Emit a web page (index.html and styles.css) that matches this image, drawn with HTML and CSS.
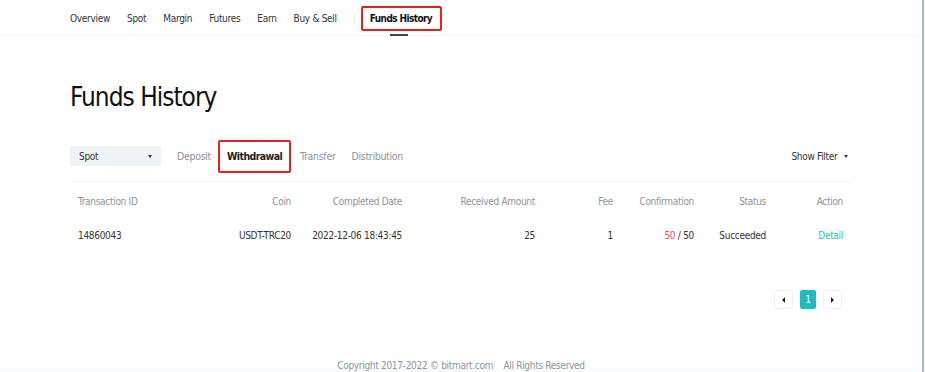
FILE: index.html
```html
<!DOCTYPE html>
<html>
<head>
    <meta charset="utf-8">
    <link rel="stylesheet" href="styles.css">
</head>
<body>
<div class="page">

<div class="topnav">
    <div class="wrap nav-items">
        <a class="nav-link">Overview</a>
        <a class="nav-link">Spot</a>
        <a class="nav-link">Margin</a>
        <a class="nav-link">Futures</a>
        <a class="nav-link">Earn</a>
        <a class="nav-link">Buy &amp; Sell</a>
        <span class="nav-sep"></span>
        <a class="nav-link nav-active">Funds History</a>
    </div>
</div>

<div class="wrap">
    <h1 class="title">Funds History</h1>

    <div class="toolbar">
        <div class="select">Spot <span class="caret"></span></div>
        <a class="tab">Deposit</a>
        <a class="tab tab-active">Withdrawal</a>
        <a class="tab">Transfer</a>
        <a class="tab">Distribution</a>
        <a class="filter">Show Filter <span class="caret"></span></a>
    </div>

    <div class="grid head">
        <div class="left">Transaction ID</div>
        <div>Coin</div>
        <div>Completed Date</div>
        <div>Received Amount</div>
        <div>Fee</div>
        <div>Confirmation</div>
        <div>Status</div>
        <div>Action</div>
    </div>
    <div class="grid row">
        <div class="left">14860043</div>
        <div>USDT-TRC20</div>
        <div>2022-12-06 18:43:45</div>
        <div>25</div>
        <div>1</div>
        <div><span class="red">50</span> / 50</div>
        <div>Succeeded</div>
        <div><a class="link">Detail</a></div>
    </div>

    <div class="pager">
        <span class="pg"><span class="tri tri-left"></span></span>
        <span class="pg pg-on">1</span>
        <span class="pg"><span class="tri tri-right"></span></span>
    </div>

    <div class="footer">Copyright 2017-2022 &copy; bitmart.com &nbsp;&nbsp; All Rights Reserved</div>
</div>

</div>
</body>
</html>
```

FILE: styles.css
```css
* {
    box-sizing: border-box;
    font-family: "DejaVu Sans Condensed", "Liberation Sans", sans-serif;
}

html, body {
    height: 100%;
}

body {
    margin: 0;
    background: #f9fbfd;
    color: #333;
    font-size: 10px;
    letter-spacing: -0.3px;
    overflow: hidden;
}

.page {
    width: 924px;
    height: 372px;
    background: linear-gradient(#fff 368px, #f9fbfd 368px);
    border-right: 2px solid #a7bcc6;
}

.wrap {
    width: 782px;
    margin: 0 auto;
}

.topnav {
    height: 36px;
    border-bottom: 1px solid #f3f4f6;
}

.nav-items {
    display: flex;
    align-items: center;
    height: 36px;
    gap: 17px;
}

.nav-link {
    color: #333;
}

.nav-sep {
    width: 1px;
    height: 12px;
    background: #eceef0;
}

.nav-active {
    position: relative;
    font-weight: bold;
    letter-spacing: -0.6px;
    color: #111;
    border: 2px solid #e4231d;
    border-radius: 2px;
    padding: 5px 8px 5px 7px;
    margin-left: -11px;
}

.nav-active::after {
    content: "";
    position: absolute;
    left: 27px;
    bottom: -7px;
    width: 18px;
    height: 2px;
    background: #444;
}

.title {
    margin: 48px 0 0;
    font-size: 26px;
    font-weight: normal;
    color: #111;
    line-height: 26px;
    letter-spacing: -1px;
}

.toolbar {
    display: flex;
    align-items: center;
    margin-top: 29px;
    height: 34px;
}

.select {
    width: 91px;
    height: 20px;
    background: #eef3f6;
    border-radius: 2px;
    padding: 0 9px;
    display: flex;
    align-items: center;
    justify-content: space-between;
    color: #333;
    margin-right: 16px;
}

.caret {
    display: inline-block;
    border-left: 2.5px solid transparent;
    border-right: 2.5px solid transparent;
    border-top: 3px solid #333;
    vertical-align: middle;
}

.tab {
    color: #8b949c;
    font-size: 10.5px;
    margin-right: 16px;
}

.tab-active {
    color: #222;
    font-weight: bold;
    letter-spacing: -0.6px;
    border: 2px solid #e4231d;
    border-radius: 2px;
    height: 33px;
    padding: 0 7px;
    display: flex;
    align-items: center;
    margin-left: -9px;
    margin-right: 9px;
}

.filter {
    margin-left: auto;
    margin-right: 4px;
    color: #333;
}

.filter .caret {
    margin-left: 4px;
}

.grid {
    display: grid;
    grid-template-columns: 138px 83px 111px 133px 78px 81px 72px 77px;
    text-align: right;
}

.grid .left {
    text-align: left;
    padding-left: 8px;
}

.head {
    margin-top: 8px;
    border-top: 1px solid #f2f3f5;
    height: 40px;
    align-items: center;
    color: #8b949c;
}

.row {
    height: 28px;
    align-items: center;
    color: #333;
}

.red {
    color: #f04b62;
}

.link {
    color: #26bfc7;
}

.pager {
    display: flex;
    justify-content: flex-end;
    gap: 7px;
    margin-top: 41px;
    margin-right: 10px;
}

.pg {
    width: 19px;
    height: 19px;
    border: 1px solid #eef0f2;
    border-radius: 2px;
    display: flex;
    align-items: center;
    justify-content: center;
    color: #fff;
}

.pg-on {
    width: 16px;
    background: #1cbcc1;
    border-color: #1cbcc1;
}

.tri {
    border-top: 3px solid transparent;
    border-bottom: 3px solid transparent;
}

.tri-left {
    border-right: 3px solid #222;
}

.tri-right {
    border-left: 3px solid #222;
}

.footer {
    margin-top: 51px;
    line-height: 12px;
    text-align: center;
    color: #8b949c;
}
```
